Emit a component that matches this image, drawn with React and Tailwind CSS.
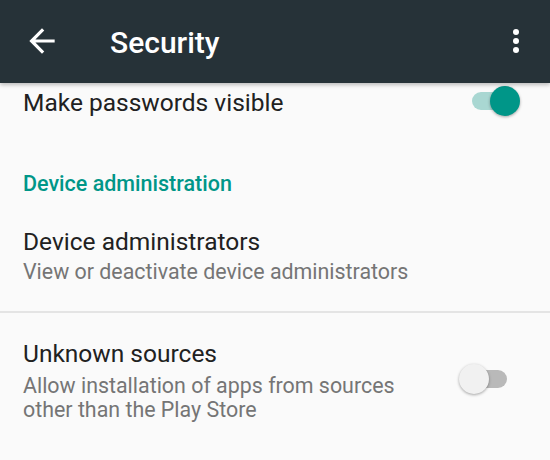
import React from 'react';

function Toggle({ on }) {
  return (
    <div className="relative w-[53px] h-[30px] shrink-0">
      <div
        className={`absolute left-[5px] top-[6px] w-[43px] h-[18px] rounded-full ${
          on ? 'bg-[#a9d7d2]' : 'bg-[#b9b9b9]'
        }`}
      />
      <div
        className={`absolute top-0 w-[30px] h-[30px] rounded-full shadow-[0_1px_3px_rgba(0,0,0,0.35)] ${
          on ? 'right-0 bg-[#009688]' : 'left-0 bg-[#f1f1f1]'
        }`}
      />
    </div>
  );
}

export default function App() {
  return (
    <div
      className="min-h-screen bg-[#fafafa] overflow-hidden"
      style={{ fontFamily: 'Roboto, "Liberation Sans", sans-serif' }}
    >
      {/* Toolbar */}
      <div className="relative z-10 h-[83px] bg-[#263238] flex items-center shadow-[0_2px_4px_rgba(0,0,0,0.25)]">
        <svg viewBox="0 0 24 24" className="w-[38px] h-[38px] ml-[23px] -mt-[1px]" fill="#ffffff">
          <path d="M20 11H7.83l5.59-5.59L12 4l-8 8 8 8 1.41-1.41L7.83 13H20v-2z" />
        </svg>
        <h1 className="ml-[49px] text-[30px] leading-[36px] font-medium text-white mt-[2px]">Security</h1>
        <svg viewBox="0 0 24 24" className="w-[36px] h-[36px] ml-auto mr-[16px] -mt-[1px]" fill="#ffffff">
          <circle cx="12" cy="6" r="2" />
          <circle cx="12" cy="12" r="2" />
          <circle cx="12" cy="18" r="2" />
        </svg>
      </div>

      <div className="pt-[5px]">
        {/* Make passwords visible */}
        <div className="flex items-center justify-between pl-[23px] pr-[30px] h-[30px]">
          <span className="text-[24.5px] leading-[30px] text-[#212121]">Make passwords visible</span>
          <div className="-mt-[4px]">
            <Toggle on />
          </div>
        </div>

        {/* Section header */}
        <div className="mt-[53px] pl-[23px] text-[21.5px] leading-[25px] font-medium text-[#009688]">
          Device administration
        </div>

        {/* Device administrators */}
        <div className="mt-[31px] pl-[23px]">
          <div className="text-[24.5px] leading-[30px] text-[#212121]">Device administrators</div>
          <div className="mt-[2px] text-[21.4px] leading-[25px] text-[#757575]">
            View or deactivate device administrators
          </div>
        </div>

        <div className="mt-[27px] h-[2px] bg-[#e4e4e4]" />

        {/* Unknown sources */}
        <div className="mt-[26px] flex items-start justify-between pl-[23px] pr-[38px]">
          <div>
            <div className="text-[24.5px] leading-[30px] text-[#212121]">Unknown sources</div>
            <div className="mt-[5px] text-[21.4px] leading-[24px] text-[#757575]">
              Allow installation of apps from sources
              <br />
              other than the Play Store
            </div>
          </div>
          <div className="mt-[25px]">
            <Toggle />
          </div>
        </div>
      </div>
    </div>
  );
}
